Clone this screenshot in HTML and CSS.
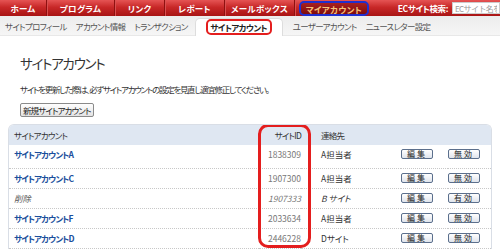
FILE: index.html
```html
<!DOCTYPE html>
<html lang="ja">
<head>
<meta charset="utf-8">
<title>サイトアカウント</title>
<link rel="stylesheet" href="styles.css">
</head>
<body>
<header class="topnav">
  <a class="tn-item w47">ホーム</a>
  <a class="tn-item w68">プログラム</a>
  <a class="tn-item w50">リンク</a>
  <a class="tn-item w60">レポート</a>
  <a class="tn-item w70">メールボックス</a>
  <a class="tn-item tn-active">マイアカウント</a>
  <div class="tn-search">
    <span class="tn-label">ECサイト検索:</span>
    <input class="tn-input" type="text" placeholder="ECサイト名を入力">
  </div>
</header>
<nav class="subnav">
  <a class="sn-item">サイトプロフィール</a>
  <a class="sn-item">アカウント情報</a>
  <a class="sn-item">トランザクション</a>
  <div class="sn-tab"><span class="sn-mark">サイトアカウント</span></div>
  <a class="sn-item">ユーザーアカウント</a>
  <a class="sn-item">ニュースレター設定</a>
</nav>
<main class="content">
  <h1 class="title">サイトアカウント</h1>
  <p class="note">サイトを更新した際は、必ずサイトアカウントの設定を見直し適宜修正してください。</p>
  <button class="newbtn" type="button">新規サイトアカウント</button>
  <div class="tablewrap">
    <table class="acct">
      <thead>
        <tr><th class="c1">サイトアカウント</th><th class="c2">サイトID</th><th class="c3">連絡先</th><th class="c4"></th><th class="c5"></th></tr>
      </thead>
      <tbody>
        <tr class="first"><td class="c1"><a class="acc">サイトアカウントA</a></td><td class="c2">1838309</td><td class="c3">A担当者</td><td class="c4"><button class="sb" type="button">編集</button></td><td class="c5"><button class="sb" type="button">無効</button></td></tr>
        <tr><td class="c1"><a class="acc">サイトアカウントC</a></td><td class="c2">1907300</td><td class="c3">A担当者</td><td class="c4"><button class="sb" type="button">編集</button></td><td class="c5"><button class="sb" type="button">無効</button></td></tr>
        <tr class="del"><td class="c1"><span class="deleted">削除</span></td><td class="c2">1907333</td><td class="c3">B サイト</td><td class="c4"><button class="sb" type="button">編集</button></td><td class="c5"><button class="sb" type="button">有効</button></td></tr>
        <tr><td class="c1"><a class="acc">サイトアカウントF</a></td><td class="c2">2033634</td><td class="c3">A担当者</td><td class="c4"><button class="sb" type="button">編集</button></td><td class="c5"><button class="sb" type="button">無効</button></td></tr>
        <tr><td class="c1"><a class="acc">サイトアカウントD</a></td><td class="c2">2446228</td><td class="c3">Dサイト</td><td class="c4"><button class="sb" type="button">編集</button></td><td class="c5"><button class="sb" type="button">無効</button></td></tr>
      </tbody>
    </table>
    <div class="idmark"></div>
  </div>
</main>
</body>
</html>
```

FILE: styles.css
```css
* { box-sizing: border-box; }
html, body { margin: 0; padding: 0; }
body {
  width: 500px;
  height: 250px;
  overflow: hidden;
  background: #fff;
  font-family: "Noto Sans CJK JP", "Noto Sans", sans-serif;
  font-feature-settings: "palt";
  color: #333;
}
a { text-decoration: none; white-space: nowrap; }

.topnav {
  display: flex;
  align-items: center;
  height: 16px;
  background: linear-gradient(#e55454 0%, #c82828 45%, #a81414 100%);
  overflow: hidden;
}
.tn-item {
  height: 16px;
  display: flex;
  align-items: center;
  justify-content: center;
  color: #fff;
  font-size: 8.5px;
  font-weight: bold;
  letter-spacing: 0.3px;
  border-right: 1px solid #8e1010;
  box-shadow: 1px 0 0 #d85050;
}
.w47 { width: 47px; }
.w68 { width: 68px; }
.w50 { width: 50px; }
.w60 { width: 60px; }
.w70 { width: 70px; }
.tn-active {
  width: 70px;
  height: 15px;
  margin-left: 4px;
  margin-top: 1px;
  border: 2px solid #1f2fd0;
  border-radius: 5px;
  background: linear-gradient(#a82020, #7e0c0c);
  color: #f7c27a;
  box-shadow: none;
}
.tn-search {
  margin-left: auto;
  display: flex;
  align-items: center;
  gap: 4px;
}
.tn-label {
  color: #fff;
  font-size: 8.5px;
  font-weight: bold;
  letter-spacing: -0.4px;
}
.tn-input {
  width: 48px;
  height: 12px;
  border: 1px solid #ccc;
  padding: 0 2px;
  font-family: inherit;
  font-size: 8px;
  letter-spacing: -0.6px;
  color: #999;
  background: #fff;
  outline: none;
}
.tn-input::placeholder { color: #9a9a9a; }

.subnav {
  display: flex;
  align-items: flex-end;
  height: 20px;
  background: linear-gradient(#ececec, #f6f6f6);
  padding-left: 5px;
  border-bottom: 1px solid #e8e8e8;
}
.sn-item {
  font-size: 8.5px;
  letter-spacing: -0.7px;
  color: #555;
  height: 19px;
  display: flex;
  align-items: center;
  margin-right: 9px;
}
.sn-tab {
  width: 88px;
  height: 18px;
  margin: 0 10px -1px -2px;
  background: #fff;
  border: 1px solid #ddd;
  border-bottom: none;
  border-radius: 5px 5px 0 0;
  display: flex;
  align-items: flex-start;
  justify-content: center;
}
.sn-mark {
  width: 66px;
  height: 16px;
  border: 2px solid #e41e1e;
  border-radius: 5px;
  font-size: 8.5px;
  font-weight: bold;
  letter-spacing: -0.6px;
  white-space: nowrap;
  color: #222;
  display: flex;
  align-items: center;
  justify-content: center;
}

.content { padding: 0 8px; }
.title {
  margin: 18px 0 0 12px;
  font-size: 13.5px;
  font-weight: normal;
  letter-spacing: -1.3px;
  color: #333;
  line-height: 18px;
}
.note {
  margin: 11px 0 0 12px;
  font-size: 8.5px;
  letter-spacing: -1.3px;
  color: #333;
  line-height: 12px;
}
.newbtn {
  margin: 8px 0 0 12px;
  display: block;
  height: 14px;
  padding: 0 2px;
  font-family: inherit;
  font-feature-settings: "palt";
  font-size: 8.5px;
  letter-spacing: -0.9px;
  line-height: 10px;
  color: #222;
  border: 1px solid #8a8a8a;
  border-radius: 2px;
  background: linear-gradient(#fefefe, #e3e3e3);
}

.tablewrap {
  position: relative;
  margin-top: 7px;
  width: 484px;
  border: 1px solid #d9dee6;
  border-bottom: none;
  border-radius: 6px 6px 0 0;
  overflow: hidden;
}
.acct {
  width: 100%;
  border-collapse: collapse;
  font-size: 8.5px;
}
.acct th {
  height: 20px;
  background: #dfe7f2;
  font-weight: normal;
  text-align: left;
  color: #333;
  padding: 0;
  letter-spacing: -0.8px;
  white-space: nowrap;
}
.acct td {
  height: 20px;
  padding: 0;
  border-bottom: 1px dotted #c8c8c8;
  white-space: nowrap;
}
.acct tr.first td { height: 23px; padding-bottom: 4px; }
.c1 { width: 250px; padding-left: 5px !important; }
.c2 { width: 42px; text-align: right !important; color: #777; letter-spacing: 0; }
.c3 { width: 100px; padding-left: 20px !important; letter-spacing: 0; }
.c4 { width: 47px; }
.acc { color: #1b4f9c; font-weight: bold; letter-spacing: -0.9px; }
.deleted { color: #555; font-style: italic; }
tr.del .c2, tr.del .c3 { font-style: italic; }
.sb {
  width: 32px;
  height: 10px;
  padding: 0;
  font-family: inherit;
  font-size: 8px;
  line-height: 8px;
  letter-spacing: 2px;
  color: #222;
  border: 1px solid #5b6f8c;
  border-radius: 2px;
  background: linear-gradient(#ffffff, #dfe4ec);
  display: block;
}
.idmark {
  position: absolute;
  left: 249px;
  top: -1px;
  width: 53px;
  height: 124px;
  border: 3px solid #e41e1e;
  border-radius: 10px;
}
```
